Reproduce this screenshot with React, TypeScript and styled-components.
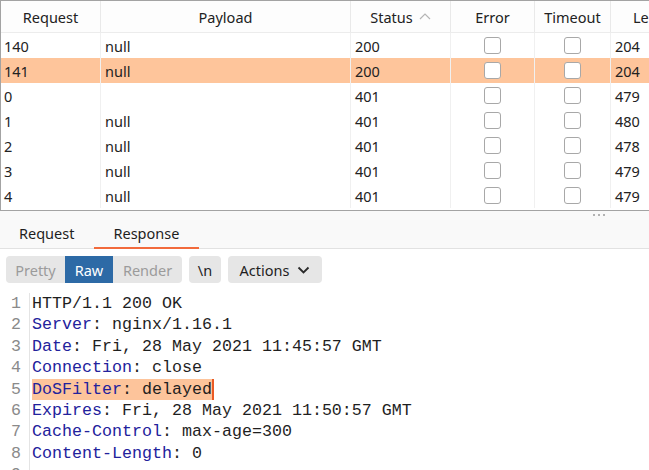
import React from "react";
import styled, { createGlobalStyle } from "styled-components";

type Row = {
  req: string;
  payload: string;
  status: string;
  length: string;
  selected?: boolean;
};

const rows: Row[] = [
  { req: "140", payload: "null", status: "200", length: "204" },
  { req: "141", payload: "null", status: "200", length: "204", selected: true },
  { req: "0", payload: "", status: "401", length: "479" },
  { req: "1", payload: "null", status: "401", length: "480" },
  { req: "2", payload: "null", status: "401", length: "478" },
  { req: "3", payload: "null", status: "401", length: "479" },
  { req: "4", payload: "null", status: "401", length: "479" },
];

type Line = { name?: string; value: string; mark?: boolean };

const lines: Line[] = [
  { value: "HTTP/1.1 200 OK" },
  { name: "Server", value: "nginx/1.16.1" },
  { name: "Date", value: "Fri, 28 May 2021 11:45:57 GMT" },
  { name: "Connection", value: "close" },
  { name: "DoSFilter", value: "delayed", mark: true },
  { name: "Expires", value: "Fri, 28 May 2021 11:50:57 GMT" },
  { name: "Cache-Control", value: "max-age=300" },
  { name: "Content-Length", value: "0" },
  { value: "" },
];

const GlobalStyle = createGlobalStyle`
  body {
    margin: 0;
    background: #ffffff;
    font-family: "Noto Sans", "Open Sans", sans-serif;
    color: #222222;
    overflow: hidden;
  }
`;

const Page = styled.div`
  width: 649px;
  height: 470px;
  overflow: hidden;
  display: flex;
  flex-direction: column;
`;

const Table = styled.div`
  border-top: 1px solid #a3a3a3;
  border-left: 1px solid #a3a3a3;
  border-bottom: 1px solid #a3a3a3;
  padding-bottom: 2px;
  background: #ffffff;
`;

const cols = "99px 250px 100px 84px 76px 1fr";

const HeaderRow = styled.div`
  display: grid;
  grid-template-columns: ${cols};
  height: 31px;
  border-bottom: 1px solid #ececec;
  background: #fdfdfd;
`;

const HeadCell = styled.div<{ $first?: boolean; $pad?: number }>`
  display: flex;
  align-items: center;
  justify-content: ${(p) => (p.$pad ? "flex-start" : "center")};
  padding-left: ${(p) => p.$pad ?? 0}px;
  border-left: ${(p) => (p.$first ? "none" : "1px solid #e9e9e9")};
  font-size: 14.5px;
  white-space: nowrap;
  overflow: hidden;
`;

const SortArrow = styled.svg`
  margin-left: 6px;
  margin-top: -1px;
`;

const BodyRow = styled.div<{ $selected?: boolean }>`
  display: grid;
  grid-template-columns: ${cols};
  height: 25px;
  background: ${(p) => (p.$selected ? "#fec59b" : "transparent")};
`;

const Cell = styled.div<{ $first?: boolean; $center?: boolean }>`
  display: flex;
  align-items: center;
  justify-content: ${(p) => (p.$center ? "center" : "flex-start")};
  padding-left: ${(p) => (p.$first ? "3px" : p.$center ? "0" : "4px")};
  border-left: ${(p) => (p.$first ? "none" : "1px solid #f0f0f0")};
  font-size: 14.5px;
  white-space: nowrap;
  overflow: hidden;
`;

const Check = styled.span`
  width: 15px;
  height: 15px;
  border: 1px solid #a8a8a8;
  border-radius: 3px;
  background: #ffffff;
`;

const TabBar = styled.div`
  position: relative;
  display: flex;
  height: 38px;
  background: #f9f9f9;
  border-bottom: 1px solid #e2e2e2;
`;

const Grip = styled.div`
  position: absolute;
  top: 3px;
  right: 44px;
  display: flex;
  gap: 3px;
`;

const Dot = styled.span`
  width: 2px;
  height: 2px;
  border-radius: 1px;
  background: #9a9a9a;
`;

const Tab = styled.div<{ $active?: boolean }>`
  padding: 12px 20px 0 19px;
  height: 38px;
  box-sizing: border-box;
  font-size: 14.5px;
  line-height: 20px;
  color: #1e1e1e;
  border-bottom: 2px solid ${(p) => (p.$active ? "#f26a3c" : "transparent")};
  margin-bottom: -1px;
`;

const Toolbar = styled.div`
  display: flex;
  align-items: center;
  gap: 7px;
  padding: 7px 0 6px 6px;
`;

const Segmented = styled.div`
  display: flex;
  height: 27px;
  border-radius: 4px;
  overflow: hidden;
  background: #e6e6e6;
`;

const Segment = styled.div<{ $active?: boolean; $w: number }>`
  width: ${(p) => p.$w}px;
  display: flex;
  align-items: center;
  justify-content: center;
  font-size: 14.5px;
  color: ${(p) => (p.$active ? "#ffffff" : "#9b9b9b")};
  background: ${(p) => (p.$active ? "#2d6aa6" : "transparent")};
`;

const ToolButton = styled.div<{ $w: number }>`
  width: ${(p) => p.$w}px;
  height: 27px;
  display: flex;
  align-items: center;
  justify-content: center;
  gap: 8px;
  border-radius: 4px;
  background: #e6e6e6;
  font-size: 14.5px;
  color: #1e1e1e;
`;

const Editor = styled.div`
  display: flex;
  flex: 1;
  padding-top: 4px;
`;

const Gutter = styled.div`
  width: 30px;
  border-right: 1px solid #e4e4e4;
  box-sizing: border-box;
  padding-right: 8px;
  text-align: right;
  font-family: "Liberation Mono", monospace;
  font-size: 16.6px;
  line-height: 21.4px;
  color: #8a8a8a;
`;

const Code = styled.div`
  padding-left: 2px;
  font-family: "Liberation Mono", monospace;
  font-size: 16.66px;
  line-height: 21.4px;
  color: #1f1f1f;
  white-space: pre;
`;

const CodeLine = styled.div`
  height: 21.4px;
`;

const Mark = styled.span<{ $on?: boolean }>`
  background: ${(p) => (p.$on ? "#fdc49b" : "transparent")};
  border-right: ${(p) => (p.$on ? "2px solid #ea5a24" : "none")};
  display: inline-block;
  line-height: 21.4px;
`;

const Name = styled.span`
  color: #22229c;
`;

export default function App() {
  return (
    <Page>
      <GlobalStyle />
      <Table>
        <HeaderRow>
          <HeadCell $first>Request</HeadCell>
          <HeadCell>Payload</HeadCell>
          <HeadCell>
            Status
            <SortArrow width="12" height="8" viewBox="0 0 12 8">
              <path d="M1 7 L6 2 L11 7" fill="none" stroke="#b5b5b5" strokeWidth="1.2" />
            </SortArrow>
          </HeadCell>
          <HeadCell>Error</HeadCell>
          <HeadCell>Timeout</HeadCell>
          <HeadCell $pad={22}>Length</HeadCell>
        </HeaderRow>
        {rows.map((r) => (
          <BodyRow key={r.req} $selected={r.selected}>
            <Cell $first>{r.req}</Cell>
            <Cell>{r.payload}</Cell>
            <Cell>{r.status}</Cell>
            <Cell $center>
              <Check />
            </Cell>
            <Cell $center>
              <Check />
            </Cell>
            <Cell>{r.length}</Cell>
          </BodyRow>
        ))}
      </Table>

      <TabBar>
        <Tab>Request</Tab>
        <Tab $active>Response</Tab>
        <Grip>
          <Dot />
          <Dot />
          <Dot />
        </Grip>
      </TabBar>

      <Toolbar>
        <Segmented>
          <Segment $w={59}>Pretty</Segment>
          <Segment $w={48} $active>
            Raw
          </Segment>
          <Segment $w={69}>Render</Segment>
        </Segmented>
        <ToolButton $w={32}>\n</ToolButton>
        <ToolButton $w={94}>
          Actions
          <svg width="13" height="8" viewBox="0 0 13 8">
            <path d="M1.5 1.5 L6.5 6.5 L11.5 1.5" fill="none" stroke="#2a2a2a" strokeWidth="1.8" />
          </svg>
        </ToolButton>
      </Toolbar>

      <Editor>
        <Gutter>
          {lines.map((_, i) => (
            <div key={i}>{i + 1}</div>
          ))}
        </Gutter>
        <Code>
          {lines.map((l, i) => (
            <CodeLine key={i}>
              {l.name ? (
                <Mark $on={l.mark}>
                  <Name>{l.name}</Name>: {l.value}
                </Mark>
              ) : (
                l.value
              )}
            </CodeLine>
          ))}
        </Code>
      </Editor>
    </Page>
  );
}
